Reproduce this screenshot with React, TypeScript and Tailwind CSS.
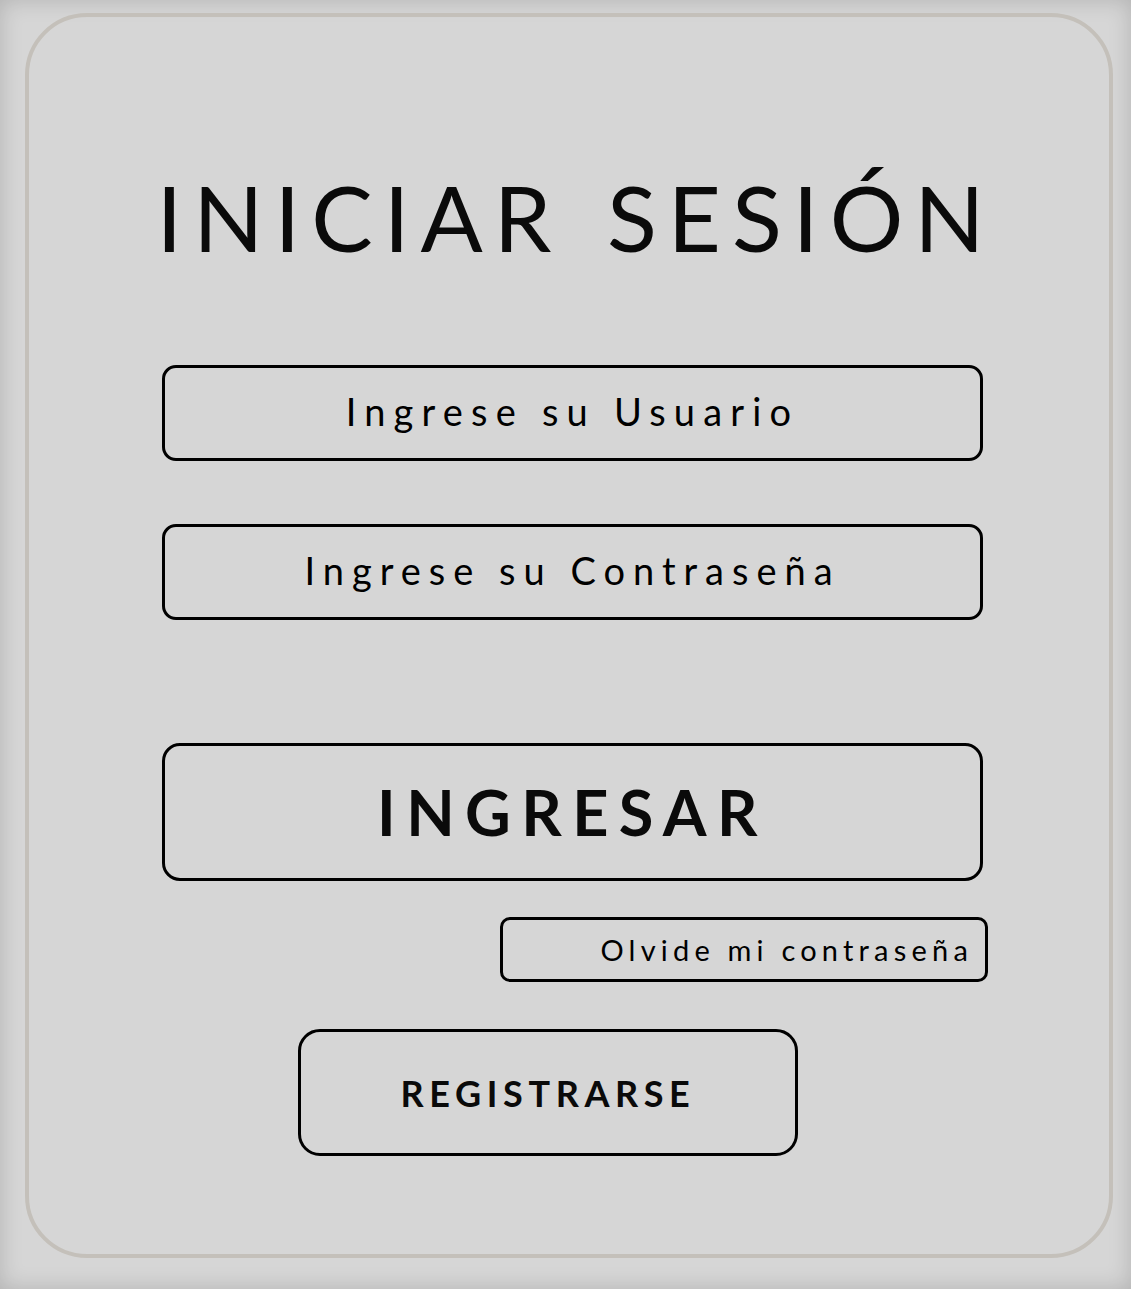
import { useState } from "react";

const font = { fontFamily: "Lato, 'Open Sans', 'Liberation Sans', sans-serif" };

export default function App() {
    const [usuario, setUsuario] = useState("");
    const [clave, setClave] = useState("");

    return (
        <div
            className="w-full h-[1289px] bg-[#d6d6d6] shadow-[inset_0_0_22px_rgba(0,0,0,0.17)] pt-[13px] pl-[25px]"
            style={font}
        >
            <div className="w-[1088px] h-[1245px] rounded-[62px] border-[4px] border-[#c4c0ba] flex flex-col items-start pl-[133px]">
                {/* Title */}
                <h1 className="w-[880px] -ml-[26px] mt-[154px] text-center whitespace-nowrap text-[92px] leading-none tracking-[11px] [word-spacing:10px] text-[#0a0a0a]">
                    INICIAR SESIÓN
                </h1>

                {/* Inputs */}
                <input
                    value={usuario}
                    onChange={(e) => setUsuario(e.target.value)}
                    placeholder="Ingrese su Usuario"
                    className="mt-[102px] w-[821px] h-[96px] pb-[4px] rounded-[14px] border-[3px] border-black bg-transparent text-center text-[38px] tracking-[8.2px] text-black placeholder:text-black outline-none"
                />
                <input
                    type="password"
                    value={clave}
                    onChange={(e) => setClave(e.target.value)}
                    placeholder="Ingrese su Contraseña"
                    className="mt-[63px] w-[821px] h-[96px] pb-[4px] rounded-[14px] border-[3px] border-black bg-transparent text-center text-[38px] tracking-[8px] text-black placeholder:text-black outline-none"
                />

                {/* Main button */}
                <button className="mt-[123px] w-[821px] h-[138px] rounded-[18px] border-[3px] border-black text-[63px] font-bold tracking-[10.4px] text-[#0a0a0a]">
                    INGRESAR
                </button>

                <button className="mt-[36px] ml-[338px] w-[488px] h-[65px] rounded-[10px] border-[3px] border-black text-right pr-[12px] text-[29px] tracking-[5.2px] text-black">
                    Olvide mi contraseña
                </button>

                <button className="mt-[47px] ml-[136px] w-[500px] h-[127px] rounded-[22px] border-[3px] border-black text-[36px] font-bold tracking-[5.6px] text-[#0a0a0a]">
                    REGISTRARSE
                </button>
            </div>
        </div>
    );
}
